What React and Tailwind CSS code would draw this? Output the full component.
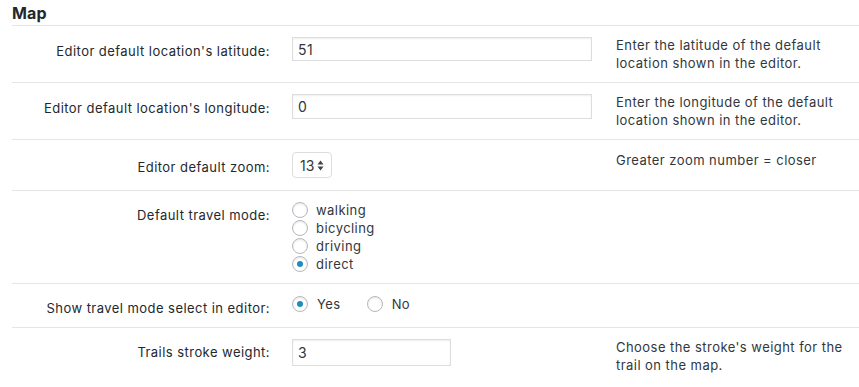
import React from "react";

const font = { fontFamily: 'Inter, "Liberation Sans", Arial, sans-serif' };

function Radio({ checked }) {
  return (
    <span className="w-4 h-4 rounded-full border border-[#b4b9be] bg-white shadow-[inset_0_1px_2px_rgba(0,0,0,0.1)] flex items-center justify-center shrink-0">
      {checked && <span className="w-[6px] h-[6px] rounded-full bg-[#1e8cbe]" />}
    </span>
  );
}

function Row({ label, labelPad = "pt-[16px]", children, desc, className = "" }) {
  return (
    <div className={`flex border-b border-[#e5e5e5] ${className}`}>
      <div className={`w-[280px] shrink-0 pr-[22px] text-right text-[13px] leading-[18px] text-[#23282d] ${labelPad}`}>
        {label}
      </div>
      <div className="w-[324px] shrink-0 pt-[11px]">{children}</div>
      <div className="w-[235px] pt-[10px] text-[13px] leading-[18px] text-[#32373c]">{desc}</div>
    </div>
  );
}

function TextInput({ value, width = "w-[300px]", height = "h-[24px]" }) {
  return (
    <div
      className={`${width} ${height} border border-[#dddddd] bg-white shadow-[inset_0_1px_2px_rgba(0,0,0,0.07)] flex items-center px-[5px] text-[14px] text-[#32373c]`}
    >
      {value}
    </div>
  );
}

export default function App() {
  return (
    <div className="min-h-screen bg-white pl-3 tracking-[0.45px]" style={font}>
      <h2 className="text-[16px] font-bold text-[#23282d] leading-[20px] pt-[3px] pb-[2px] border-b border-[#e5e5e5] tracking-[0.2px]">
        Map
      </h2>

      <Row
        label="Editor default location's latitude:"
        desc="Enter the latitude of the default location shown in the editor."
        className="pb-[10px]"
      >
        <TextInput value="51" />
      </Row>

      <Row
        label="Editor default location's longitude:"
        desc="Enter the longitude of the default location shown in the editor."
        className="pb-[10px]"
      >
        <TextInput value="0" height="h-[25px]" />
      </Row>

      <Row
        label="Editor default zoom:"
        labelPad="pt-[17px]"
        desc="Greater zoom number = closer"
        className="pb-[12px] pt-[1px]"
      >
        <div className="w-[40px] h-[26px] border border-[#dddddd] rounded-[4px] bg-white flex items-center pl-[7px] gap-[3px] text-[14px] tracking-normal text-[#32373c]">
          <span>13</span>
          <svg width="7" height="11" viewBox="0 0 7 11">
            <path d="M3.5 0.5 L6.5 4.5 L0.5 4.5 Z" fill="#444" />
            <path d="M3.5 10.5 L6.5 6.5 L0.5 6.5 Z" fill="#444" />
          </svg>
        </div>
      </Row>

      <Row label="Default travel mode:" labelPad="pt-[15px]" className="pb-[10px]">
        <div className="-mt-[1px] flex flex-col text-[13px] leading-[18px] text-[#32373c]">
          {["walking", "bicycling", "driving", "direct"].map((m) => (
            <label key={m} className="flex items-center gap-[8px]">
              <Radio checked={m === "direct"} />
              <span>{m}</span>
            </label>
          ))}
        </div>
      </Row>

      <Row label="Show travel mode select in editor:" labelPad="pt-[15px]" className="pb-[10px]">
        <div className="flex items-center text-[13px] leading-[18px] text-[#32373c]">
          <label className="flex items-center gap-[9px]">
            <Radio checked />
            <span>Yes</span>
          </label>
          <label className="flex items-center gap-[9px] ml-[26px]">
            <Radio />
            <span>No</span>
          </label>
        </div>
      </Row>

      <Row
        label="Trails stroke weight:"
        labelPad="pt-[15px]"
        desc="Choose the stroke's weight for the trail on the map."
        className="pb-[14px] border-b-0"
      >
        <TextInput value="3" width="w-[159px]" height="h-[27px]" />
      </Row>
    </div>
  );
}
